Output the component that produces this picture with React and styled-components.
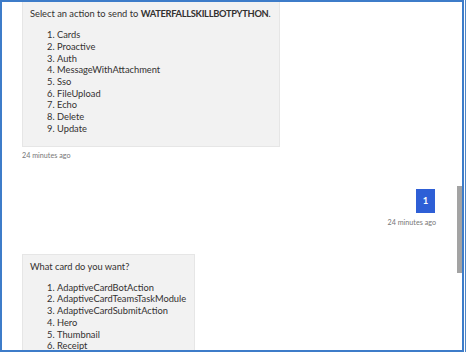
import React from "react";
import styled, { createGlobalStyle } from "styled-components";

const Global = createGlobalStyle`
  html, body { margin: 0; padding: 0; background: #ffffff; }
  body { width: 466px; height: 352px; overflow: hidden; }
`;

const Outer = styled.div`
  width: 466px;
  height: 352px;
  box-sizing: border-box;
  border-right: 1px solid #4f86c6;
  padding-right: 1px;
  background: #fff;
`;

const Frame = styled.div`
  height: 100%;
  box-sizing: border-box;
  border: 2px solid #3d7cc9;
  display: flex;
  overflow: hidden;
  font-family: "Lato", "Open Sans", sans-serif;
  color: #323130;
`;

const Transcript = styled.div`
  flex: 1;
  display: flex;
  flex-direction: column;
  padding: 0 21px 0 20px;
  overflow: hidden;
  & > * { flex-shrink: 0; }
`;

const Track = styled.div`
  width: 5px;
  padding-top: 184px;
  box-sizing: border-box;
`;

const Thumb = styled.div`
  width: 5px;
  height: 87px;
  background: #a3a3a3;
`;

const Bubble = styled.div`
  align-self: flex-start;
  background: #f2f2f2;
  border: 1px solid #e6e6e6;
  border-top: ${(p) => (p.$cut ? "none" : "1px solid #e6e6e6")};
  padding: 6px 8px 11px 7px;
  margin-top: ${(p) => p.$gap || 0}px;
  font-size: 9.3px;
  line-height: 11.7px;
`;

const Intro = styled.div`
  margin-bottom: 9.5px;
  white-space: nowrap;
  b { font-weight: 700; letter-spacing: -0.3px; }
`;

const List = styled.ol`
  margin: 0;
  padding-left: 27px;
  li { white-space: nowrap; }
`;

const Stamp = styled.div`
  align-self: ${(p) => (p.$right ? "flex-end" : "flex-start")};
  font-size: 7.2px;
  line-height: 9px;
  color: #777;
  margin-top: ${(p) => p.$gap}px;
`;

const UserBubble = styled.div`
  align-self: flex-end;
  margin-top: 29px;
  margin-right: 1px;
  width: 19px;
  height: 24px;
  background: #2e5fd6;
  color: #fff;
  font-size: 9.5px;
  font-weight: 700;
  display: flex;
  align-items: center;
  justify-content: center;
`;

const actions = ["Cards", "Proactive", "Auth", "MessageWithAttachment", "Sso", "FileUpload", "Echo", "Delete", "Update"];
const cards = ["AdaptiveCardBotAction", "AdaptiveCardTeamsTaskModule", "AdaptiveCardSubmitAction", "Hero", "Thumbnail", "Receipt"];

export default function App() {
  return (
    <>
      <Global />
      <Outer>
        <Frame>
          <Transcript>
            <Bubble $cut>
              <Intro>
                Select an action to send to <b>WATERFALLSKILLBOTPYTHON</b>.
              </Intro>
              <List>
                {actions.map((a) => (
                  <li key={a}>{a}</li>
                ))}
              </List>
            </Bubble>
            <Stamp $gap={4}>24 minutes ago</Stamp>
            <UserBubble>1</UserBubble>
            <Stamp $right $gap={5}>24 minutes ago</Stamp>
            <Bubble $gap={27}>
              <Intro>What card do you want?</Intro>
              <List>
                {cards.map((c) => (
                  <li key={c}>{c}</li>
                ))}
              </List>
            </Bubble>
          </Transcript>
          <Track>
            <Thumb />
          </Track>
        </Frame>
      </Outer>
    </>
  );
}
